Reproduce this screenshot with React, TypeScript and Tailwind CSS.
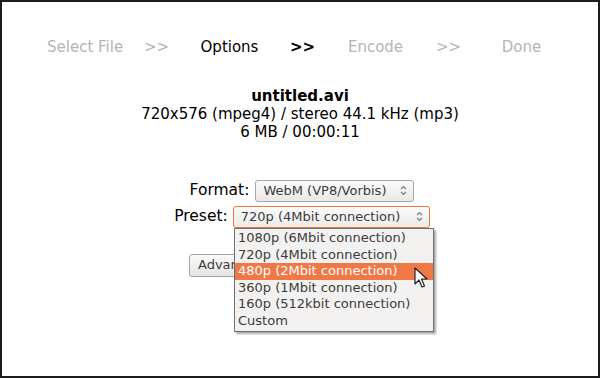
const steps = [
  { label: "Select File", active: false },
  { label: ">>", active: false },
  { label: "Options", active: true },
  { label: ">>", active: true, bold: true },
  { label: "Encode", active: false },
  { label: ">>", active: false },
  { label: "Done", active: false },
];

const presets = [
  "1080p (6Mbit connection)",
  "720p (4Mbit connection)",
  "480p (2Mbit connection)",
  "360p (1Mbit connection)",
  "160p (512kbit connection)",
  "Custom",
];

function Arrows() {
  return (
    <svg width="7" height="11" viewBox="0 0 7 11" className="shrink-0">
      <path d="M1 4 L3.5 1.5 L6 4" fill="none" stroke="#7a7a7a" strokeWidth="1.1" />
      <path d="M1 7 L3.5 9.5 L6 7" fill="none" stroke="#7a7a7a" strokeWidth="1.1" />
    </svg>
  );
}

function Cursor() {
  return (
    <svg
      width="14"
      height="22"
      viewBox="0 0 14 22"
      className="absolute left-[412px] top-[265px]"
    >
      <path
        d="M1 1 L1 17 L5 13 L8 20 L10.5 19 L7.5 12 L13 12 Z"
        fill="#ffffff"
        stroke="#222222"
        strokeWidth="1.2"
        strokeLinejoin="round"
      />
    </svg>
  );
}

export default function App() {
  return (
    <div
      className="relative h-[378px] w-[600px] overflow-hidden border-2 border-[#1c1c1c] bg-white text-[15px] text-black"
      style={{ fontFamily: '"DejaVu Sans", sans-serif' }}
    >
      <div className="mt-[35px] flex justify-center pl-[5px]">
        <div className="grid grid-cols-[repeat(7,73px)] leading-[20px]">
          {steps.map((s, i) => (
            <span
              key={i}
              className={`whitespace-nowrap text-center ${
                s.active ? "text-black" : "text-[#b4b4b4]"
              } ${s.bold ? "font-bold" : ""}`}
            >
              {s.label}
            </span>
          ))}
        </div>
      </div>

      <div className="mt-[30px] flex flex-col items-center leading-[18px]">
        <span className="font-bold">untitled.avi</span>
        <span>720x576 (mpeg4) / stereo 44.1 kHz (mp3)</span>
        <span>6 MB / 00:00:11</span>
      </div>

      <div className="mt-[38px] flex flex-col items-center gap-[3px] pl-[4px]">
        <div className="flex items-center gap-[6px]">
          <span className="text-[15.5px]">Format:</span>
          <div className="flex h-[22px] w-[159px] items-center justify-between rounded-[3px] border border-[#a6a6a6] bg-gradient-to-b from-[#fbfbfb] to-[#e9e8e6] pl-[7px] pr-[6px] text-[13px] text-[#3c3c3c]">
            <span>WebM (VP8/Vorbis)</span>
            <Arrows />
          </div>
        </div>
        <div className="flex items-center gap-[5px]">
          <span className="text-[15.5px]">Preset:</span>
          <div className="flex h-[22px] w-[197px] items-center justify-between rounded-[3px] border border-[#e9743f] bg-gradient-to-b from-[#fbfbfb] to-[#ecebe9] pl-[7px] pr-[6px] text-[13px] text-[#3c3c3c]">
            <span>720p (4Mbit connection)</span>
            <Arrows />
          </div>
        </div>
        <div className="mt-[22px] flex w-full justify-center">
          <button
            type="button"
            className="h-[23px] w-[226px] rounded-[3px] border border-[#a6a6a6] bg-gradient-to-b from-[#fbfbfb] to-[#e6e5e3] pl-[8px] text-left text-[13px] text-[#3c3c3c]"
          >
            Advanced Options
          </button>
        </div>
      </div>

      <ul className="absolute left-[232px] top-[226px] w-[200px] border border-[#707070] bg-[#f2f1f0] py-[1px] text-[13px] text-[#3c3c3c] shadow-[2px_2px_2px_rgba(0,0,0,0.35)]">
        {presets.map((p) => (
          <li
            key={p}
            className={`h-[16.6px] pl-[3px] leading-[16.6px] ${
              p.startsWith("480p") ? "bg-[#f07746] text-white" : ""
            }`}
          >
            {p}
          </li>
        ))}
      </ul>

      <Cursor />
    </div>
  );
}
